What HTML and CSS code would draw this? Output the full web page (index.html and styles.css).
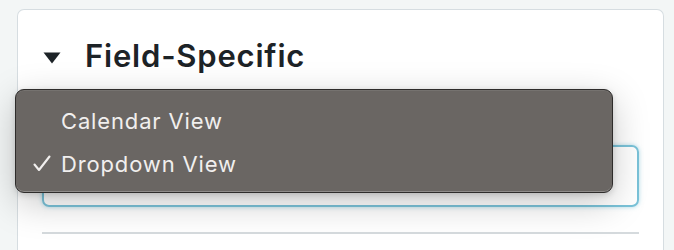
FILE: index.html
```html
<!DOCTYPE html>
<html>
<head>
<meta charset="utf-8">
<link rel="stylesheet" href="styles.css">
</head>
<body>
<div class="card">
  <div class="section-head">
    <svg class="caret" width="18" height="12" viewBox="0 0 18 12"><path d="M0.5 0.5 H17.5 L9 11.5 Z" fill="#1d2327"/></svg>
    <h2 class="title">Field-Specific</h2>
  </div>
  <div class="select">
    <svg class="chev" width="10" height="12" viewBox="0 0 10 12"><path d="M2 4 L5 1 L8 4 M2 8 L5 11 L8 8" fill="none" stroke="#333" stroke-width="1.4"/></svg>
  </div>
  <div class="divider"></div>
</div>
<div class="menu">
  <div class="item"><span class="check"></span><span>Calendar View</span></div>
  <div class="item"><span class="check"><svg width="18" height="17" viewBox="0 0 18 17"><path d="M1.5 9.5 L6 15 L16.5 1.5" fill="none" stroke="#f1efee" stroke-width="2.1" stroke-linecap="round" stroke-linejoin="round"/></svg></span><span>Dropdown View</span></div>
</div>
</body>
</html>
```
FILE: styles.css
```css
html, body {
  margin: 0;
  padding: 0;
}
body {
  background: #f3f6f6;
  width: 674px;
  height: 250px;
  overflow: hidden;
  position: relative;
  font-family: "Inter", "Liberation Sans", sans-serif;
}
.card {
  margin: 9px 10px 0 17px;
  height: 241px;
  box-sizing: border-box;
  background: #fff;
  border: 1.5px solid #d6dde1;
  border-bottom: none;
  border-radius: 7px 7px 0 0;
  padding: 24px 24px 0 24px;
  overflow: hidden;
}
.section-head {
  display: flex;
  align-items: center;
  gap: 24px;
  height: 44px;
}
.caret {
  flex: none;
  margin-left: 1px;
  margin-top: 4px;
}
.title {
  margin: 0;
  font-family: "Inter", "Liberation Sans", sans-serif;
  font-weight: 600;
  font-size: 31px;
  letter-spacing: 0.8px;
  color: #1d2327;
  line-height: 44px;
}
.select {
  margin-top: 67px;
  height: 62px;
  box-sizing: border-box;
  border: 2px solid #7ac3d9;
  border-radius: 7px;
  box-shadow: 0 0 4px rgba(110, 190, 215, 0.55);
  display: flex;
  align-items: center;
  justify-content: flex-end;
  padding-right: 24px;
}
.chev {
  margin-top: 2px;
}
.divider {
  margin-top: 25px;
  height: 2px;
  background: #d5dadd;
}
.menu {
  position: absolute;
  left: 15px;
  top: 89px;
  width: 598px;
  height: 104px;
  box-sizing: border-box;
  background: #6a6663;
  border: 1px solid #2e2c2b;
  border-radius: 9px;
  box-shadow: inset 0 -1px 0 rgba(255,255,255,0.25), inset 0 1px 0 rgba(255,255,255,0.08), 0 10px 36px rgba(0,0,0,0.22), 0 2px 6px rgba(0,0,0,0.15);
  padding-top: 9px;
  color: #f1efee;
  font-family: "Inter", "Liberation Sans", sans-serif;
  font-size: 22px;
  letter-spacing: 0.85px;
}
.item {
  display: flex;
  align-items: center;
  height: 43px;
  padding-left: 17px;
}
.check {
  width: 28px;
  flex: none;
  display: flex;
  align-items: center;
}
```
